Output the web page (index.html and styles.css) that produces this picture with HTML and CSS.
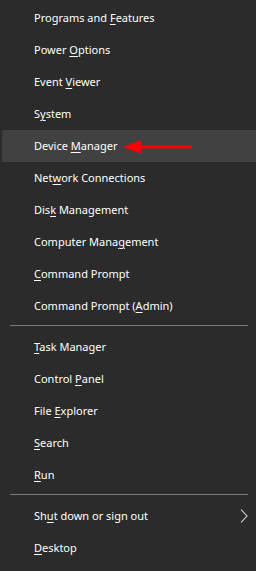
FILE: index.html
```html
<!doctype html>
<html>
    <head>
        <meta name="viewport" content="width=device-width, initial-scale=1.0">
        <title>Quick Link Menu</title>
        <link rel="stylesheet" href="styles.css">
    </head>
    <body>
        <div class="menu">
            <div class="group">
                <div class="item">Programs and <u>F</u>eatures</div>
                <div class="item">Power <u>O</u>ptions</div>
                <div class="item">Event <u>V</u>iewer</div>
                <div class="item">S<u>y</u>stem</div>
                <div class="item active">Device <u>M</u>anager<svg class="arrow" width="72" height="14" viewBox="0 0 72 14">
                        <polygon points="0,7 18,0.5 18,13.5" fill="#f00" />
                        <rect x="17" y="5.5" width="52" height="3" fill="#f00" />
                    </svg></div>
                <div class="item">Net<u>w</u>ork Connections</div>
                <div class="item">Dis<u>k</u> Management</div>
                <div class="item">Computer Mana<u>g</u>ement</div>
                <div class="item"><u>C</u>ommand Prompt</div>
                <div class="item">Command Prompt (<u>A</u>dmin)</div>
            </div>
            <div class="sep"></div>
            <div class="group">
                <div class="item"><u>T</u>ask Manager</div>
                <div class="item">Control <u>P</u>anel</div>
                <div class="item">File <u>E</u>xplorer</div>
                <div class="item"><u>S</u>earch</div>
                <div class="item"><u>R</u>un</div>
            </div>
            <div class="sep"></div>
            <div class="group">
                <div class="item">Sh<u>u</u>t down or sign out<svg class="chevron" width="8" height="14" viewBox="0 0 8 14">
                        <polyline points="1,0.5 7,7 1,13.5" fill="none" stroke="#ddd" stroke-width="1.1" />
                    </svg></div>
                <div class="item"><u>D</u>esktop</div>
            </div>
        </div>
    </body>
</html>
```
FILE: styles.css
```css
html,
body {
    margin: 0;
    padding: 0;
    background-color: #2b2b2b;
}

body {
    font-family: "Noto Sans", "Open Sans", sans-serif;
    font-size: 11px;
    color: #fff;
}

.menu {
    width: 256px;
    height: 571px;
    padding-top: 2px;
    box-sizing: border-box;
    overflow: hidden;
}

.item {
    height: 32px;
    line-height: 32px;
    margin-left: 2px;
    padding-left: 32px;
    white-space: nowrap;
    position: relative;
}

.item u {
    text-underline-offset: 2px;
}

.item.active {
    background-color: #414141;
}

.arrow {
    position: absolute;
    left: 121px;
    top: 10px;
}

.chevron {
    position: absolute;
    left: 238px;
    top: 9px;
}

.sep {
    height: 1px;
    background-color: #7a7a7a;
    margin: 3px 8px 5px 10px;
}
```
